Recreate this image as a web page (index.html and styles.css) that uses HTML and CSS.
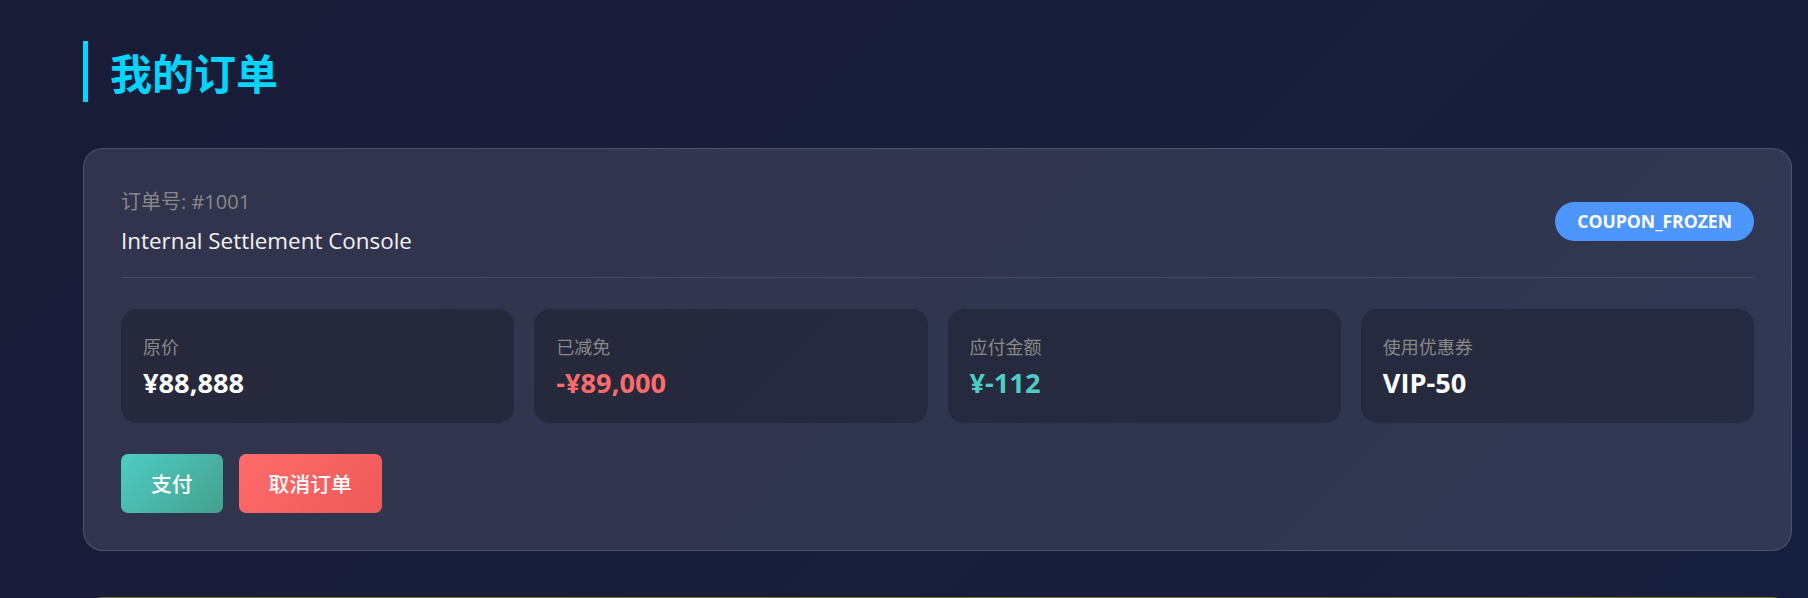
FILE: index.html
```html
<!DOCTYPE html>
<html lang="zh-CN">
<head>
<meta charset="utf-8">
<title>我的订单</title>
<link rel="stylesheet" href="styles.css">
</head>
<body>
<div class="page">
  <h1 class="page-title">我的订单</h1>

  <section class="order-card">
    <header class="order-head">
      <div class="order-info">
        <div class="order-no">订单号: #1001</div>
        <div class="order-name">Internal Settlement Console</div>
      </div>
      <span class="badge">COUPON_FROZEN</span>
    </header>
    <div class="stats">
      <div class="stat">
        <div class="stat-label">原价</div>
        <div class="stat-value">¥88,888</div>
      </div>
      <div class="stat">
        <div class="stat-label">已减免</div>
        <div class="stat-value red">-¥89,000</div>
      </div>
      <div class="stat">
        <div class="stat-label">应付金额</div>
        <div class="stat-value teal">¥-112</div>
      </div>
      <div class="stat">
        <div class="stat-label">使用优惠券</div>
        <div class="stat-value">VIP-50</div>
      </div>
    </div>
    <div class="actions">
      <button class="btn btn-pay">支付</button>
      <button class="btn btn-cancel">取消订单</button>
    </div>
  </section>

  <section class="order-card warn"></section>
</div>
</body>
</html>
```

FILE: styles.css
```css
html, body {
  margin: 0;
  padding: 0;
}

body {
  background: linear-gradient(135deg, #1a1c37 0%, #161f3d 100%);
  background-attachment: fixed;
  min-height: 100vh;
  font-family: "Open Sans", "Noto Sans CJK SC", sans-serif;
  color: #eee;
}

.page {
  padding: 41px 16px 40px 83px;
}

.page-title {
  margin: 0 0 46px;
  font-family: "Noto Sans CJK SC", sans-serif;
  font-size: 42px;
  line-height: 61px;
  font-weight: 700;
  color: #00d4ff;
  border-left: 5px solid #00d4ff;
  padding-left: 22px;
}

.order-card {
  background: linear-gradient(135deg, rgba(255,255,255,0.105) 0%, rgba(255,255,255,0.115) 100%);
  border: 1px solid rgba(255,255,255,0.14);
  border-radius: 20px;
  padding: 38px 37px 37px;
  margin-bottom: 46px;
}

.order-card.warn {
  border-color: #7a6e3a;
  min-height: 300px;
}

.order-head {
  display: flex;
  align-items: center;
  justify-content: space-between;
  padding-bottom: 21px;
  border-bottom: 1px solid rgba(255,255,255,0.1);
  margin-bottom: 31px;
}

.order-no {
  font-size: 20px;
  line-height: 29px;
  color: #888;
}

.order-name {
  margin-top: 10px;
  font-size: 22.4px;
  line-height: 30px;
  color: #f2f2f2;
}

.badge {
  background: #4d96ff;
  color: #fff;
  font-weight: 700;
  font-size: 17.6px;
  line-height: 23px;
  padding: 8px 22px;
  border-radius: 999px;
}

.stats {
  display: grid;
  grid-template-columns: repeat(4, 1fr);
  gap: 20px;
}

.stat {
  background: rgba(0,0,0,0.22);
  border-radius: 16px;
  padding: 24px 22px 22px;
}

.stat-label {
  font-family: "Noto Sans CJK SC", sans-serif;
  font-size: 18px;
  line-height: 26px;
  color: #888;
  margin-bottom: 6px;
}

.stat-value {
  font-size: 27.2px;
  line-height: 36px;
  font-weight: 700;
  color: #fff;
}

.stat-value.red { color: #ff6b6b; }
.stat-value.teal { color: #4ecdc4; }

.actions {
  display: flex;
  gap: 16px;
  margin-top: 31px;
}

.btn {
  border: 0;
  border-radius: 7px;
  padding: 16px 30px;
  font-family: "Noto Sans CJK SC", sans-serif;
  font-size: 20.8px;
  line-height: 27px;
  font-weight: 500;
  color: #fff;
  cursor: pointer;
}

.btn-pay {
  background: linear-gradient(135deg, #4ecdc4 0%, #44a08d 100%);
}

.btn-cancel {
  background: linear-gradient(135deg, #ff6b6b 0%, #ee5a5a 100%);
}
```
